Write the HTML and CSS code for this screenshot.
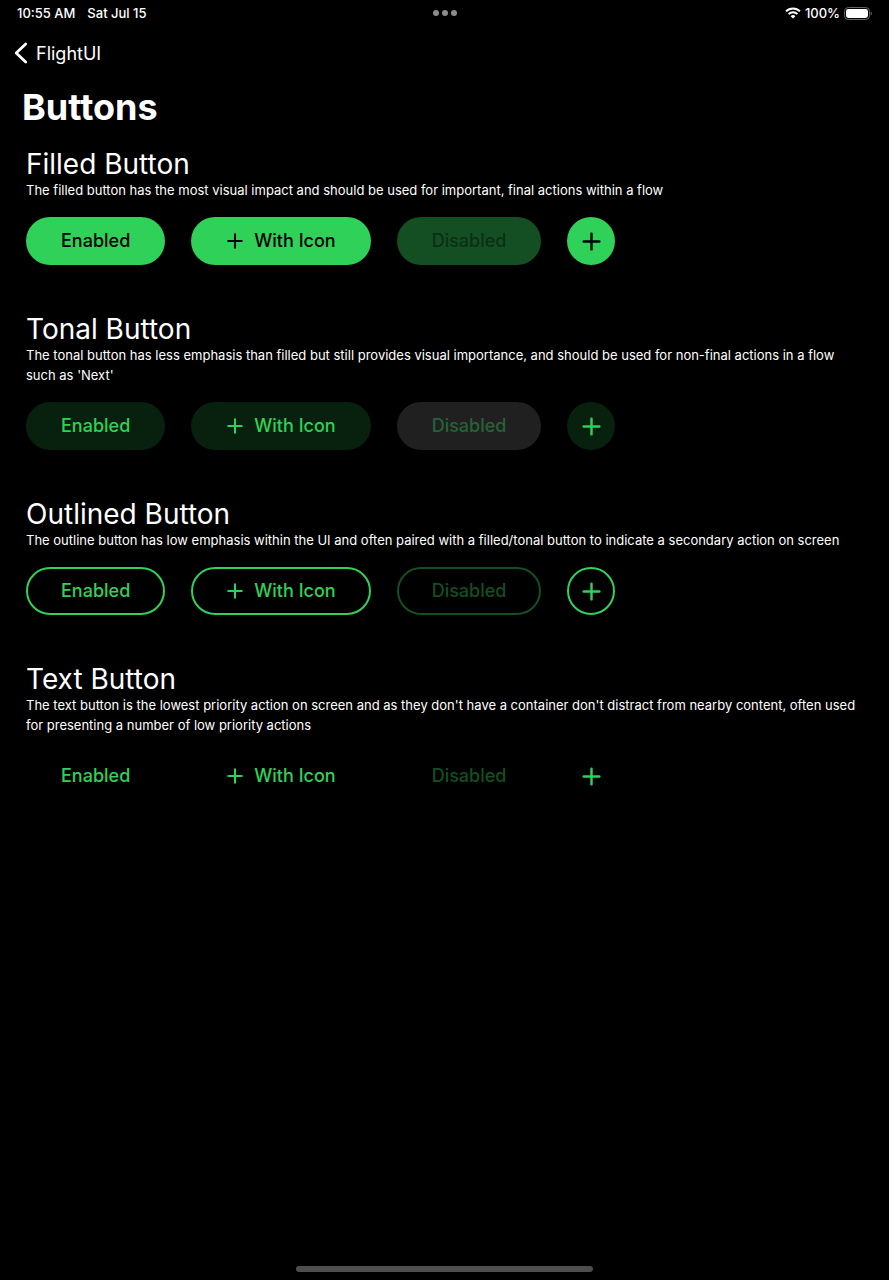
FILE: index.html
```html
<!DOCTYPE html>
<html lang="en">
<head>
<meta charset="utf-8">
<meta name="viewport" content="width=device-width, initial-scale=1">
<title>Buttons</title>
<link rel="stylesheet" href="styles.css">
</head>
<body>
<svg width="0" height="0" class="defs" aria-hidden="true">
  <symbol id="plus" viewBox="0 0 20 20"><path d="M10 2.5v15M2.5 10h15" fill="none" stroke="currentColor" stroke-width="2.3" stroke-linecap="round"/></symbol>
</svg>
<header class="status">
  <div class="status-left"><span>10:55 AM</span><span>Sat Jul 15</span></div>
  <div class="dots"><i></i><i></i><i></i></div>
  <div class="status-right">
    <svg class="wifi" viewBox="0 0 16 12" aria-hidden="true"><g fill="none" stroke="#fff" stroke-width="2"><path d="M1 4.4a10 10 0 0 1 14 0"/><path d="M3.6 7.1a6.2 6.2 0 0 1 8.8 0"/></g><path d="M5.6 9.2a3.4 3.4 0 0 1 4.8 0L8 11.6z" fill="#fff"/></svg>
    <span>100%</span>
    <svg class="battery" viewBox="0 0 28 13" aria-hidden="true"><rect x=".5" y=".5" width="25" height="12" rx="3.8" fill="none" stroke="#666"/><rect x="2" y="2" width="22" height="9" rx="2.4" fill="#fff"/><path d="M26.7 4.5c1.6.8 1.6 3.2 0 4z" fill="#666"/></svg>
  </div>
</header>
<nav class="nav">
  <a class="back" href="#"><svg class="chevron" viewBox="0 0 14 22" aria-hidden="true"><path d="M11.7 2 2.2 11l9.5 9" fill="none" stroke="#fff" stroke-width="2.8" stroke-linecap="round" stroke-linejoin="round"/></svg>FlightUI</a>
</nav>
<main class="main">
  <h1 class="title">Buttons</h1>
  <section class="group filled">
    <h2>Filled Button</h2>
    <p>The filled button has the most visual impact and should be used for important, final actions within a flow</p>
    <div class="row">
      <button class="btn">Enabled</button>
      <button class="btn"><svg class="icon" aria-hidden="true"><use href="#plus"/></svg>With Icon</button>
      <button class="btn" disabled>Disabled</button>
      <button class="btn round" aria-label="Add"><svg class="icon-lg" aria-hidden="true"><use href="#plus"/></svg></button>
    </div>
  </section>
  <section class="group tonal">
    <h2>Tonal Button</h2>
    <p>The tonal button has less emphasis than filled but still provides visual importance, and should be used for non-final actions in a flow such as 'Next'</p>
    <div class="row">
      <button class="btn">Enabled</button>
      <button class="btn"><svg class="icon" aria-hidden="true"><use href="#plus"/></svg>With Icon</button>
      <button class="btn" disabled>Disabled</button>
      <button class="btn round" aria-label="Add"><svg class="icon-lg" aria-hidden="true"><use href="#plus"/></svg></button>
    </div>
  </section>
  <section class="group outlined">
    <h2>Outlined Button</h2>
    <p>The outline button has low emphasis within the UI and often paired with a filled/tonal button to indicate a secondary action on screen</p>
    <div class="row">
      <button class="btn">Enabled</button>
      <button class="btn"><svg class="icon" aria-hidden="true"><use href="#plus"/></svg>With Icon</button>
      <button class="btn" disabled>Disabled</button>
      <button class="btn round" aria-label="Add"><svg class="icon-lg" aria-hidden="true"><use href="#plus"/></svg></button>
    </div>
  </section>
  <section class="group text">
    <h2>Text Button</h2>
    <p>The text button is the lowest priority action on screen and as they don't have a container don't distract from nearby content, often used for presenting a number of low priority actions</p>
    <div class="row">
      <button class="btn">Enabled</button>
      <button class="btn"><svg class="icon" aria-hidden="true"><use href="#plus"/></svg>With Icon</button>
      <button class="btn" disabled>Disabled</button>
      <button class="btn round" aria-label="Add"><svg class="icon-lg" aria-hidden="true"><use href="#plus"/></svg></button>
    </div>
  </section>
</main>
<div class="home"></div>
</body>
</html>
```
FILE: styles.css
```css
* { box-sizing: border-box; }
body {
  margin: 0;
  min-height: 100vh;
  display: flex;
  flex-direction: column;
  background: #000;
  color: #fff;
  font-family: Inter, "Liberation Sans", sans-serif;
}
.defs { position: absolute; }
.status {
  display: grid;
  grid-template-columns: 1fr auto 1fr;
  align-items: center;
  height: 26px;
  padding: 0 17px;
  font-size: 13px;
  font-weight: 500;
}
.status-left { display: flex; gap: 12px; }
.dots { display: flex; gap: 3px; }
.dots i { width: 6px; height: 6px; border-radius: 50%; background: #8c8c8c; }
.status-right { display: flex; gap: 4px; justify-content: flex-end; align-items: center; }
.wifi { width: 16px; height: 12px; }
.battery { width: 28px; height: 13px; }
.nav { height: 54px; padding: 0 14px; display: flex; align-items: center; }
.back { display: flex; align-items: center; gap: 8px; color: #fff; font-size: 18px; font-weight: 400; text-decoration: none; }
.chevron { width: 14px; height: 22px; }
.main { flex: 1; padding: 5px 26px 0; }
.title { margin: 0 0 0 -4px; font-size: 36px; line-height: 44px; font-weight: 700; }
.group { margin-bottom: 48px; }
.title + .group { padding-top: 19px; }
.group h2 { margin: 0; font-size: 28px; line-height: 32px; font-weight: 400; }
.group p { margin: 0; font-size: 13px; line-height: 20px; }
.row { display: flex; flex-wrap: wrap; gap: 26px; margin-top: 17px; }
.btn {
  display: flex;
  align-items: center;
  justify-content: center;
  gap: 10px;
  height: 48px;
  padding: 0 35px;
  border: 0;
  border-radius: 24px;
  background: none;
  color: #30d158;
  font: 500 18px/24px Inter, "Liberation Sans", sans-serif;
}
.round { width: 48px; padding: 0; }
.icon { width: 18px; height: 18px; }
.icon-lg { width: 21px; height: 21px; }
.btn:disabled { color: #134f22; }
.filled .btn { background: #30d158; color: #000; }
.filled .btn:disabled { background: #134f22; color: #0a2f14; }
.tonal .btn { background: #07210e; }
.tonal .btn:disabled { background: #202020; color: #256337; }
.outlined .btn { border: 2px solid #30d158; padding: 0 33px; }
.outlined .btn:disabled { border-color: #134f22; }
.outlined .round { padding: 0; }
.home { width: 33.3%; height: 6px; margin: 0 auto 8px; border-radius: 3px; background: #4e4e4e; }
```
